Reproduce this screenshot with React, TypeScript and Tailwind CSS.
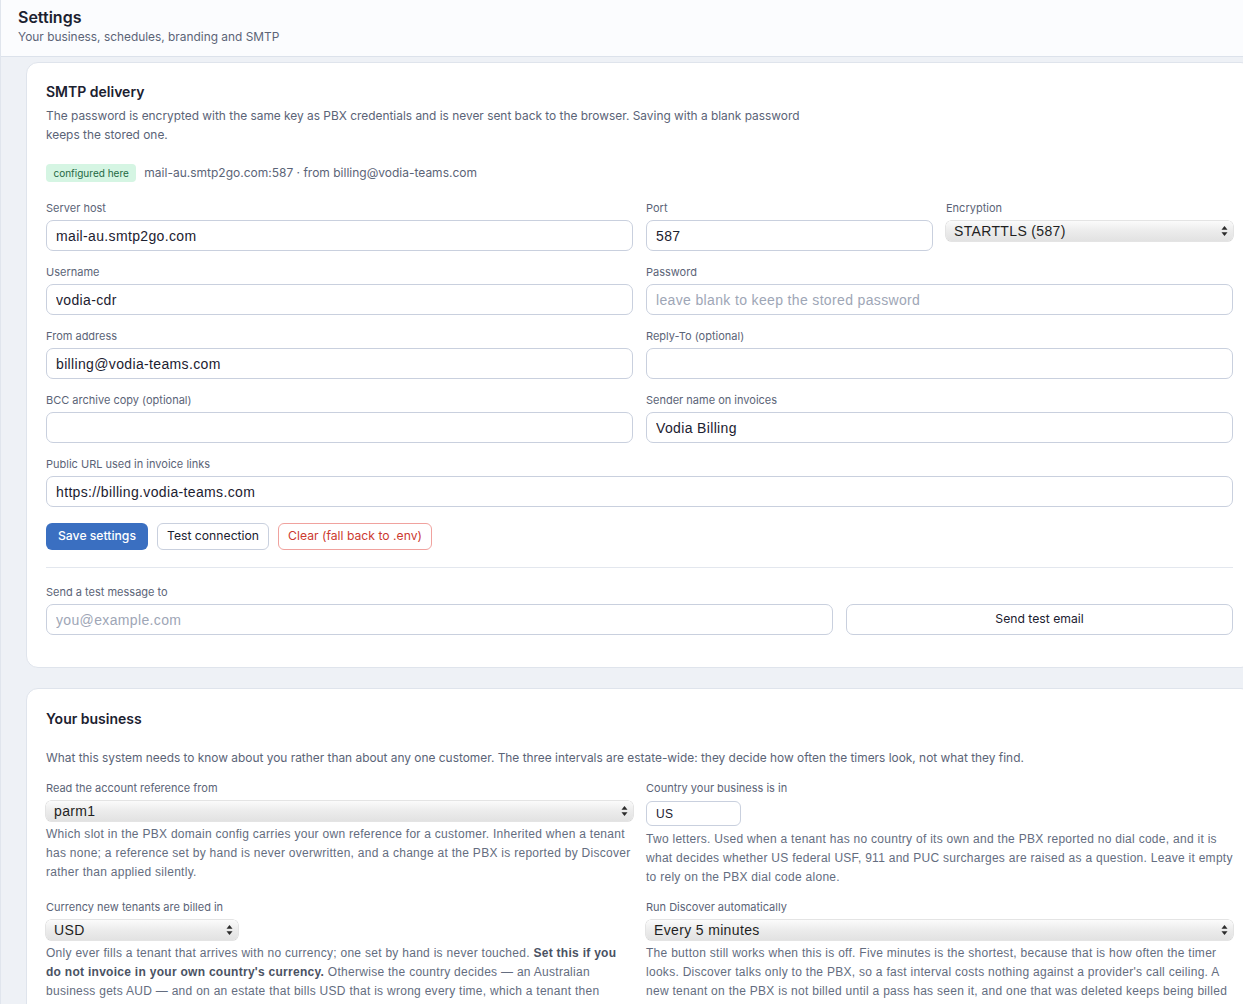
import React from 'react';

const sans = { fontFamily: 'Inter, "Noto Sans", sans-serif' };
const helv = { fontFamily: '"Liberation Sans", Arial, sans-serif' };

function Label({ children }: { children: React.ReactNode }) {
  return (
    <label className="mb-[5px] block text-[11px] leading-[14px] text-[#5b6477]" style={sans}>
      {children}
    </label>
  );
}

function TextInput({ value, placeholder }: { value?: string; placeholder?: string }) {
  return (
    <input
      defaultValue={value}
      placeholder={placeholder}
      className="block h-[31px] w-full rounded-[7px] border border-[#c9d0de] bg-white px-[9px] text-[14px] tracking-[0.35px] text-[#1c2130] outline-none placeholder:text-[#9ea6b6]"
      style={helv}
    />
  );
}

function Arrows() {
  return (
    <svg
      width="7"
      height="11"
      viewBox="0 0 7 11"
      className="pointer-events-none absolute right-[5px] top-1/2 -translate-y-1/2"
    >
      <path d="M3.5 0.5 L6.5 4.3 L0.5 4.3 Z" fill="#2b2b2b" />
      <path d="M3.5 10.5 L6.5 6.7 L0.5 6.7 Z" fill="#2b2b2b" />
    </svg>
  );
}

function NativeSelect({ value, className = '' }: { value: string; className?: string }) {
  return (
    <div className={`relative mt-[6px] ${className}`}>
      <select
        defaultValue={value}
        className="block h-[20px] w-full appearance-none rounded-[5px] bg-linear-to-b from-[#fbfbfb] via-[#ececec] to-[#e2e2e2] pl-[8px] text-[14px] leading-[20px] tracking-[0.35px] text-[#1f1f1f] shadow-[0_0_0_0.5px_#c9c9c9] outline-none"
        style={helv}
      >
        <option>{value}</option>
      </select>
      <Arrows />
    </div>
  );
}

function Help({ children }: { children: React.ReactNode }) {
  return (
    <p className="mt-[4px] text-[12px] leading-[19px] tracking-[0.28px] text-[#646d80]" style={helv}>
      {children}
    </p>
  );
}

export default function App() {
  return (
    <div className="min-h-screen w-full overflow-hidden bg-[#eef1f6]" style={sans}>
      <div className="w-[1290px] border-l border-[#e0e5ed]">
        {/* header */}
        <header className="h-[57px] border-b border-[#dce2eb] bg-[#fbfcfe] px-[17px] pt-[7px]">
          <h1 className="text-[16px] font-semibold leading-[20px] text-[#1b2130]">Settings</h1>
          <p className="mt-[1px] text-[11.9px] leading-[17px] text-[#5b6477]">
            Your business, schedules, branding and SMTP
          </p>
        </header>

        <main className="pl-[25px] pt-[5px] pb-10">
          {/* SMTP card */}
          <section className="w-[1227px] rounded-[12px] border border-[#dfe4ec] bg-white px-[19px] pb-[32px] pt-[19px]">
            <h2 className="text-[14px] font-semibold leading-[20px] text-[#1b2130]">SMTP delivery</h2>
            <p className="mt-[4px] max-w-[770px] text-[11.9px] leading-[19px] text-[#5b6477]">
              The password is encrypted with the same key as PBX credentials and is never sent back to the
              browser. Saving with a blank password keeps the stored one.
            </p>

            <div className="mt-[20px] flex items-center gap-[8px]">
              <span className="flex h-[18px] items-center rounded-[4px] bg-[#d5f5e3] px-[7.5px] text-[10px] text-[#1f6944]">
                configured here
              </span>
              <span className="text-[12px] text-[#5b6477]">
                mail-au.smtp2go.com:587 · from billing@vodia-teams.com
              </span>
            </div>

            <div className="mt-[19px] grid grid-cols-4 gap-x-[13px] gap-y-[14px]">
              <div className="col-span-2">
                <Label>Server host</Label>
                <TextInput value="mail-au.smtp2go.com" />
              </div>
              <div>
                <Label>Port</Label>
                <TextInput value="587" />
              </div>
              <div>
                <Label>Encryption</Label>
                <NativeSelect value="STARTTLS (587)" />
              </div>

              <div className="col-span-2">
                <Label>Username</Label>
                <TextInput value="vodia-cdr" />
              </div>
              <div className="col-span-2">
                <Label>Password</Label>
                <TextInput placeholder="leave blank to keep the stored password" />
              </div>

              <div className="col-span-2">
                <Label>From address</Label>
                <TextInput value="billing@vodia-teams.com" />
              </div>
              <div className="col-span-2">
                <Label>Reply-To (optional)</Label>
                <TextInput />
              </div>

              <div className="col-span-2">
                <Label>BCC archive copy (optional)</Label>
                <TextInput />
              </div>
              <div className="col-span-2">
                <Label>Sender name on invoices</Label>
                <TextInput value="Vodia Billing" />
              </div>

              <div className="col-span-4">
                <Label>Public URL used in invoice links</Label>
                <TextInput value="https://billing.vodia-teams.com" />
              </div>
            </div>

            <div className="mt-[16px] flex gap-[9px] text-[12.2px]">
              <button className="h-[27px] rounded-[6px] bg-[#3a6fc1] px-[12px] font-medium text-white">
                Save settings
              </button>
              <button className="h-[27px] rounded-[6px] border border-[#c9d0de] bg-white px-[9px] text-[#1b2130]">
                Test connection
              </button>
              <button className="h-[27px] rounded-[6px] border border-[#f0a29e] bg-white px-[9px] text-[#cc3a30]">
                Clear (fall back to .env)
              </button>
            </div>

            <div className="mt-[17px] border-t border-[#e3e7ee]" />

            <div className="mt-[17px]">
              <Label>Send a test message to</Label>
              <div className="grid grid-cols-3 gap-x-[13px]">
                <div className="col-span-2">
                  <TextInput placeholder="you@example.com" />
                </div>
                <button className="h-[31px] rounded-[7px] border border-[#c9d0de] bg-white text-[12.2px] text-[#1b2130]">
                  Send test email
                </button>
              </div>
            </div>
          </section>

          {/* business card */}
          <section className="mt-[20px] w-[1227px] rounded-[12px] border border-[#dfe4ec] bg-white px-[19px] pb-[24px] pt-[20px]">
            <h2 className="text-[14px] font-semibold leading-[20px] text-[#1b2130]">Your business</h2>
            <p className="mt-[19px] text-[11.9px] leading-[19px] text-[#5b6477]">
              What this system needs to know about you rather than about any one customer. The three intervals
              are estate-wide: they decide how often the timers look, not what they find.
            </p>

            <div className="mt-[14px] grid grid-cols-2 gap-x-[13px] gap-y-[13px]">
              <div>
                <Label>Read the account reference from</Label>
                <NativeSelect value="parm1" />
                <Help>
                  Which slot in the PBX domain config carries your own reference for a customer. Inherited when a
                  tenant has none; a reference set by hand is never overwritten, and a change at the PBX is
                  reported by Discover rather than applied silently.
                </Help>
              </div>
              <div>
                <Label>Country your business is in</Label>
                <input
                  defaultValue="US"
                  className="mt-[6px] block h-[25px] w-[95px] rounded-[6px] border border-[#c9d0de] bg-white px-[9px] text-[12px] tracking-[0.35px] text-[#1c2130] outline-none"
                  style={helv}
                />
                <Help>
                  Two letters. Used when a tenant has no country of its own and the PBX reported no dial code, and
                  it is what decides whether US federal USF, 911 and PUC surcharges are raised as a question.
                  Leave it empty to rely on the PBX dial code alone.
                </Help>
              </div>

              <div>
                <Label>Currency new tenants are billed in</Label>
                <NativeSelect value="USD" className="w-[192px]" />
                <Help>
                  Only ever fills a tenant that arrives with no currency; one set by hand is never touched.{' '}
                  <b className="font-bold text-[#4a5263]">
                    Set this if you do not invoice in your own country's currency.
                  </b>{' '}
                  Otherwise the country decides — an Australian business gets AUD — and on an estate that bills
                  USD that is wrong every time, which a tenant then notices on its first invoice.
                </Help>
              </div>
              <div>
                <Label>Run Discover automatically</Label>
                <NativeSelect value="Every 5 minutes" />
                <Help>
                  The button still works when this is off. Five minutes is the shortest, because that is how often
                  the timer looks. Discover talks only to the PBX, so a fast interval costs nothing against a
                  provider's call ceiling. A new tenant on the PBX is not billed until a pass has seen it, and one
                  that was deleted keeps being billed until a pass notices it is gone.
                </Help>
              </div>
            </div>
          </section>
        </main>
      </div>
    </div>
  );
}
